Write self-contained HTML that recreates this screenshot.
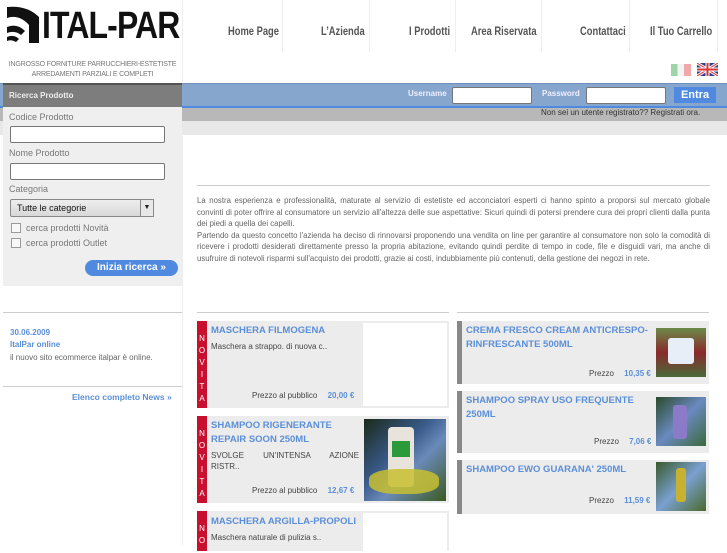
<!DOCTYPE html>
<html><head><meta charset="utf-8"><style>
*{margin:0;padding:0;box-sizing:border-box}
body{width:727px;height:545px;overflow:hidden;background:#fff;font-family:"Liberation Sans",sans-serif;position:relative;color:#555}
.a{position:absolute}
.nav{font-family:"Liberation Sans",sans-serif;font-weight:bold;font-size:12px;color:#555;top:24px;transform:scaleX(.78);transform-origin:left;white-space:nowrap}
.vl{position:absolute;top:0;width:1px;height:52px;background:#eee}
input.t{position:absolute;height:17px;border:1px solid #777;border-radius:2px;background:#fff}
.lbl{font-size:9px;color:#777}
.card{position:absolute;background:#ececec}
.nov{position:absolute;left:0;top:0;bottom:0;width:10px;background:#c8102e;color:#fff;font-size:8px;text-align:center;line-height:12px;padding-top:12px}
.ttl{color:#5b8fd8;font-weight:bold;font-size:9.5px;line-height:14px;white-space:nowrap}
.ds{font-size:8px;color:#444}
.pr{font-size:8px;color:#444;position:absolute;white-space:nowrap}
.pr b{color:#5b8fd8;font-weight:bold;margin-left:8px}
</style></head><body>
<div class="a" style="left:5px;top:5px;width:36px;height:48px">
<svg width="36" height="44" viewBox="0 0 36 44"><path d="M2 2 Q22 0 34 12 L34 38 L24 38 L24 20 Q14 9 2 13 Z" fill="#111"/><path d="M2 22 Q12 18 20 26 L16 30 Q10 25 2 28Z M2 32 Q9 29 14 34 L11 37 Q6 34 2 36Z" fill="#111"/></svg></div>
<div class="a" style="left:42px;top:6px;font-size:38px;line-height:40px;font-weight:bold;color:#111;letter-spacing:-1px;white-space:nowrap;transform:scaleX(.84);transform-origin:left">ITAL-PAR</div>
<div class="a" style="left:3px;top:60px;width:179px;text-align:center;font-size:7px;color:#777;line-height:10px;white-space:nowrap;letter-spacing:-.2px">INGROSSO FORNITURE PARRUCCHIERI-ESTETISTE<br>ARREDAMENTI PARZIALI E COMPLETI</div>
<div class="vl" style="left:182px;height:83px"></div>
<div class="vl" style="left:282px"></div><div class="vl" style="left:369px"></div><div class="vl" style="left:455px"></div><div class="vl" style="left:541px"></div><div class="vl" style="left:629px"></div><div class="vl" style="left:717px"></div>
<div class="a nav" style="left:228px">Home Page</div>
<div class="a nav" style="left:321px">L’Azienda</div>
<div class="a nav" style="left:409px">I Prodotti</div>
<div class="a nav" style="left:471px">Area Riservata</div>
<div class="a nav" style="left:580px">Contattaci</div>
<div class="a nav" style="left:650px">Il Tuo Carrello</div>
<div class="a" style="left:671px;top:64px;width:20px;height:12px;background:linear-gradient(90deg,#9ed4a8 33%,#f4f4f4 33% 66%,#f0a8a8 66%)"></div>
<div class="a" style="left:697px;top:63px;width:21px;height:13px;background:#2d3f8f;overflow:hidden"><svg width="21" height="13"><path d="M0 0L21 13M21 0L0 13" stroke="#fff" stroke-width="3"/><path d="M0 0L21 13M21 0L0 13" stroke="#d33" stroke-width="1"/><path d="M10.5 0V13M0 6.5H21" stroke="#fff" stroke-width="4"/><path d="M10.5 0V13M0 6.5H21" stroke="#d33" stroke-width="2"/></svg></div>
<div class="a" style="left:0;top:83px;width:727px;height:25px;background:#87a6cd;border-top:1px solid #6f8fbf;border-bottom:2px solid #4f8ae0"></div>
<div class="a" style="left:0;top:108px;width:727px;height:13px;background:#b8b8b8"></div>
<div class="a" style="left:0;top:121px;width:727px;height:14px;background:#e8e8e8"></div>
<div class="a" style="left:408px;top:89px;font-size:8px;font-weight:bold;color:#eef">Username</div>
<input class="t" style="left:452px;top:87px;width:80px">
<div class="a" style="left:542px;top:89px;font-size:8px;font-weight:bold;color:#eef">Password</div>
<input class="t" style="left:586px;top:87px;width:80px">
<div class="a" style="left:674px;top:87px;width:42px;height:16px;background:#4f8ae0;color:#fff;font-weight:bold;font-size:11px;text-align:center;line-height:16px">Entra</div>
<div class="a" style="left:541px;top:108px;font-size:8px;color:#333;white-space:nowrap">Non sei un utente registrato?? Registrati ora.</div>
<div class="a" style="left:3px;top:83px;width:179px;height:203px;background:#efefef"></div>
<div class="a" style="left:3px;top:83px;width:179px;height:24px;background:#7d7d7d;border-top:2px solid #555;color:#eee;font-size:8px;font-weight:bold;padding:6px 6px">Ricerca Prodotto</div>
<div class="a lbl" style="left:9px;top:112px">Codice Prodotto</div>
<input class="t" style="left:10px;top:126px;width:155px">
<div class="a lbl" style="left:9px;top:148px">Nome Prodotto</div>
<input class="t" style="left:10px;top:163px;width:155px">
<div class="a lbl" style="left:9px;top:184px">Categoria</div>
<div class="a" style="left:10px;top:199px;width:144px;height:18px;border:1px solid #888;border-radius:2px;background:linear-gradient(#eee,#d8d8d8);font-size:9px;color:#111;padding:3px 6px">Tutte le categorie</div>
<div class="a" style="left:140px;top:199px;width:14px;height:18px;border:1px solid #888;background:#e8e8e8;font-size:7px;text-align:center;line-height:16px;color:#222">▼</div>
<div class="a" style="left:11px;top:223px;width:10px;height:10px;border:1px solid #999;background:#f8f8f8"></div>
<div class="a lbl" style="left:26px;top:223px;font-size:9px">cerca prodotti Novità</div>
<div class="a" style="left:11px;top:238px;width:10px;height:10px;border:1px solid #999;background:#f8f8f8"></div>
<div class="a lbl" style="left:26px;top:238px;font-size:9px">cerca prodotti Outlet</div>
<div class="a" style="left:85px;top:260px;width:93px;height:16px;border-radius:8px;background:#4f8ae0;color:#fff;font-weight:bold;font-size:10px;text-align:center;line-height:16px">Inizia ricerca »</div>
<div class="a" style="left:3px;top:312px;width:179px;height:1px;background:#ccc"></div>
<div class="a" style="left:10px;top:328px;font-size:8px;font-weight:bold;color:#5b8fd8">30.06.2009</div>
<div class="a" style="left:10px;top:340px;font-size:8px;font-weight:bold;color:#5b8fd8">ItalPar online</div>
<div class="a" style="left:10px;top:353px;font-size:8px;color:#666">il nuovo sito ecommerce italpar è online.</div>
<div class="a" style="left:3px;top:386px;width:179px;height:1px;background:#ccc"></div>
<div class="a" style="left:72px;top:392px;font-size:8.5px;font-weight:bold;color:#5b8fd8">Elenco completo News »</div>
<div class="a" style="left:182px;top:135px;width:1px;height:410px;background:#eee"></div>
<div class="a" style="left:197px;top:185px;width:513px;height:1px;background:#ccc"></div>
<div class="a" style="left:197px;top:195px;width:513px;font-size:7.8px;line-height:11.5px;color:#666;text-align:justify">La nostra esperienza e professionalità, maturate al servizio di estetiste ed acconciatori esperti ci hanno spinto a proporsi sul mercato globale convinti di poter offrire al consumatore un servizio all'altezza delle sue aspettative: Sicuri quindi di potersi prendere cura dei propri clienti dalla punta dei piedi a quella dei capelli.<br>Partendo da questo concetto l'azienda ha deciso di rinnovarsi proponendo una vendita on line per garantire al consumatore non solo la comodità di ricevere i prodotti desiderati direttamente presso la propria abitazione, evitando quindi perdite di tempo in code, file e disguidi vari, ma anche di usufruire di notevoli risparmi sull'acquisto dei prodotti, grazie ai costi, indubbiamente più contenuti, della gestione dei negozi in rete.</div>
<div class="a" style="left:197px;top:312px;width:252px;height:1px;background:#ccc"></div>
<div class="a" style="left:457px;top:312px;width:252px;height:1px;background:#ccc"></div>
<div class="card" style="left:197px;top:321px;width:252px;height:87px"><div class="nov">N<br>O<br>V<br>I<br>T<br>A</div>
<div class="a ttl" style="left:14px;top:3px">MASCHERA FILMOGENA</div>
<div class="a ds" style="left:14px;top:21px">Maschera a strappo. di nuova c..</div>
<div class="pr" style="left:55px;top:70px">Prezzo al pubblico <b>20,00 €</b></div>
<div class="a" style="left:166px;top:2px;width:84px;height:83px;background:#fff"></div></div>
<div class="card" style="left:197px;top:416px;width:252px;height:87px"><div class="nov">N<br>O<br>V<br>I<br>T<br>A</div>
<div class="a ttl" style="left:14px;top:3px">SHAMPOO RIGENERANTE<br>REPAIR SOON 250ML</div>
<div class="a ds" style="left:14px;top:34px;width:148px;text-align:justify;line-height:12px;text-align-last:justify">SVOLGE UN'INTENSA AZIONE</div>
<div class="a ds" style="left:14px;top:46px">RISTR..</div>
<div class="pr" style="left:55px;top:70px">Prezzo al pubblico <b>12,67 €</b></div>
<div class="a" style="left:167px;top:3px;width:82px;height:82px;background:linear-gradient(135deg,#1a2a1a,#3a5a8a 40%,#6a8aba 60%,#3a5a20)"><div style="position:absolute;left:24px;top:8px;width:26px;height:60px;background:#e8e4dc;border-radius:4px"><div style="margin:14px 4px;height:16px;background:#2a9a3a"></div></div><div style="position:absolute;left:5px;top:50px;width:70px;height:25px;background:#c8c030;border-radius:40%;opacity:.85"></div></div></div>
<div class="card" style="left:197px;top:511px;width:252px;height:40px"><div class="nov">N<br>O</div>
<div class="a ttl" style="left:14px;top:4px">MASCHERA ARGILLA-PROPOLI</div>
<div class="a ds" style="left:14px;top:22px">Maschera naturale di pulizia s..</div>
<div class="a" style="left:166px;top:2px;width:84px;height:40px;background:#fff"></div></div>
<div class="card" style="left:457px;top:321px;width:252px;height:63px"><div class="a" style="left:0;top:0;bottom:0;width:5px;background:#888"></div>
<div class="a ttl" style="left:9px;top:3px;line-height:14px">CREMA FRESCO CREAM ANTICRESPO-<br>RINFRESCANTE 500ML</div>
<div class="pr" style="left:132px;top:48px">Prezzo <b>10,35 €</b></div>
<div class="a" style="left:199px;top:7px;width:50px;height:49px;background:linear-gradient(#6a8a4a,#8a2a2a 50%,#4a6a3a)"><div style="position:absolute;left:12px;top:10px;width:26px;height:26px;background:#e8eef8;border-radius:3px"></div></div></div>
<div class="card" style="left:457px;top:391px;width:252px;height:62px"><div class="a" style="left:0;top:0;bottom:0;width:5px;background:#888"></div>
<div class="a ttl" style="left:9px;top:3px;line-height:14px">SHAMPOO SPRAY USO FREQUENTE<br>250ML</div>
<div class="pr" style="left:137px;top:46px">Prezzo <b>7,06 €</b></div>
<div class="a" style="left:199px;top:6px;width:50px;height:49px;background:linear-gradient(135deg,#2a4a2a,#6a8ac0 50%,#3a6a3a)"><div style="position:absolute;left:17px;top:8px;width:14px;height:34px;background:#8a7ac8;border-radius:3px"></div></div></div>
<div class="card" style="left:457px;top:460px;width:252px;height:54px"><div class="a" style="left:0;top:0;bottom:0;width:5px;background:#888"></div>
<div class="a ttl" style="left:9px;top:3px">SHAMPOO EWO GUARANA' 250ML</div>
<div class="pr" style="left:132px;top:36px">Prezzo <b>11,59 €</b></div>
<div class="a" style="left:199px;top:2px;width:50px;height:49px;background:linear-gradient(135deg,#3a5a2a,#7aa0d0 50%,#4a6a2a)"><div style="position:absolute;left:20px;top:6px;width:10px;height:34px;background:#c8b030;border-radius:3px"></div></div></div>
</body></html>
